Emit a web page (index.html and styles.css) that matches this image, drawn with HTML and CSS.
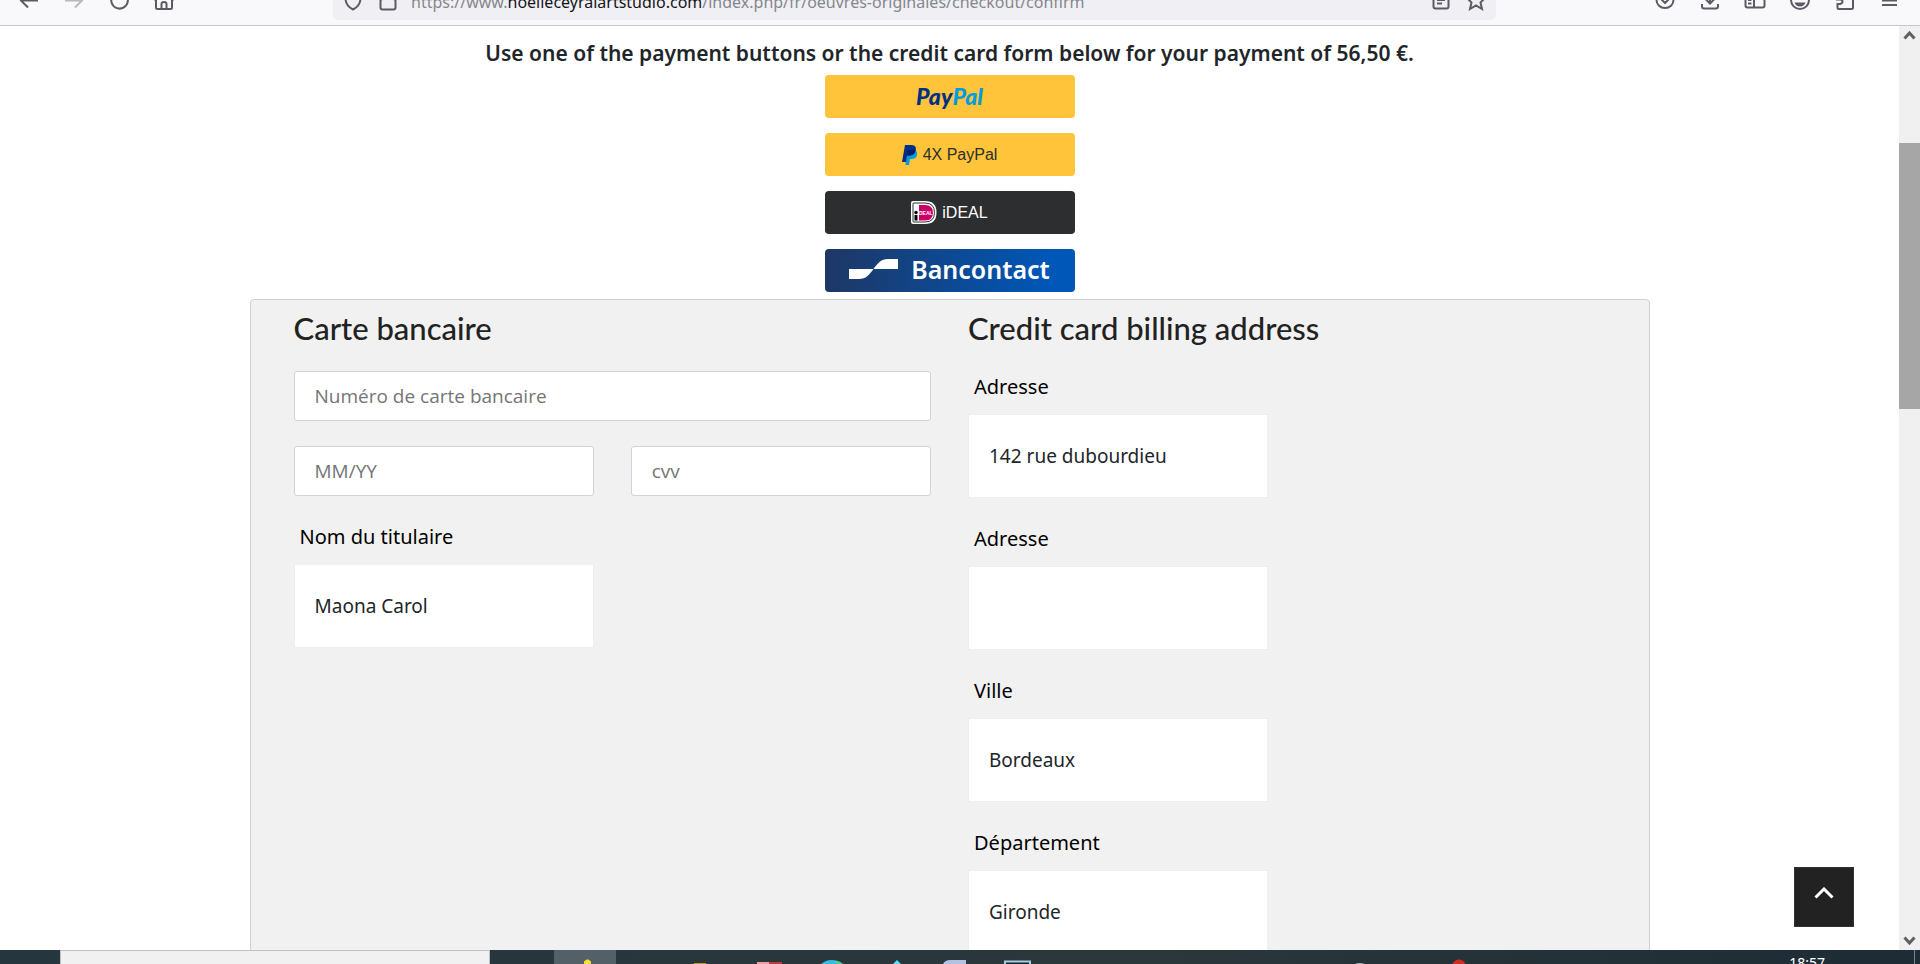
FILE: index.html
```html
<!DOCTYPE html>
<html lang="fr">
<head>
    <meta charset="UTF-8">
    <meta name="viewport" content="width=device-width, initial-scale=1.0">
    <title>Confirmation de commande</title>
    <link rel="stylesheet" href="styles.css">
</head>
<body>
    <header class="toolbar">
        <div class="nav-buttons">
            <button type="button" class="icon-btn" aria-label="Précédent">
                <svg viewBox="0 0 24 24"><path d="M21 12.500H4M11 5.500L4 12.500L11 19.500"/></svg>
            </button>
            <button type="button" class="icon-btn disabled" aria-label="Suivant">
                <svg viewBox="0 0 24 24"><path d="M3 12.500H20M13 5.500L20 12.500L13 19.500"/></svg>
            </button>
            <button type="button" class="icon-btn" aria-label="Actualiser">
                <svg viewBox="0 0 24 24"><path d="M18 6A8.300 8.300 0 1 1 12 4"/></svg>
            </button>
            <button type="button" class="icon-btn" aria-label="Accueil">
                <svg viewBox="0 0 24 24"><path d="M2 12L12 3L22 12M4 11V19.500Q4 21 5.500 21H18.500Q20 21 20 19.500V11M9.500 21V16Q9.500 14 12 14Q14.500 14 14.500 16V21"/></svg>
            </button>
        </div>
        <div class="url-bar">
            <svg class="icon" viewBox="0 0 24 24"><path d="M12 3L19.500 6V11Q19 18 12 21.500Q5 18 4.500 11V6Z"/></svg>
            <svg class="icon" viewBox="0 0 24 24"><rect x="4.500" y="11" width="15" height="10.500" rx="2"/><path d="M8 11V7A4 4 0 0 1 16 7V11"/></svg>
            <span class="url">https://www.<b>noelleceyralartstudio.com</b>/index.php/fr/oeuvres-originales/checkout/confirm</span>
            <svg class="icon" viewBox="0 0 24 24"><rect x="4.500" y="4" width="15" height="16.500" rx="2"/><path d="M8 12H16M8 15.500H13"/></svg>
            <svg class="icon" viewBox="0 0 24 24"><path d="M12 3L14.500 9L21 10L16.500 14.500L18 21L12 17.500L6 21L7.500 14.500L3 10L9.500 9Z"/></svg>
        </div>
        <div class="nav-buttons">
            <button type="button" class="icon-btn" aria-label="Protection">
                <svg viewBox="0 0 24 24"><path d="M3.500 5H20.500V12A8.500 8 0 0 1 3.500 12ZM8 11L12 15L16 11"/></svg>
            </button>
            <button type="button" class="icon-btn" aria-label="Téléchargements">
                <svg viewBox="0 0 24 24"><path d="M12 3V15M7 10.500L12 15.500L17 10.500M4 16V18.500Q4 20.500 6 20.500H18Q20 20.500 20 18.500V16"/></svg>
            </button>
            <button type="button" class="icon-btn" aria-label="Panneau latéral">
                <svg viewBox="0 0 24 24"><rect x="2.500" y="4" width="19" height="15.500" rx="2"/><path d="M11 4V19M5 12H8.500M5 15.500H8.500"/></svg>
            </button>
            <button type="button" class="icon-btn" aria-label="Compte">
                <svg viewBox="0 0 24 24"><circle cx="12" cy="12" r="9"/><path class="solid" d="M6.500 14.500H17.500Q16 18.500 12 18.500Q8 18.500 6.500 14.500Z"/><circle class="solid" cx="12" cy="9" r="3"/></svg>
            </button>
            <button type="button" class="icon-btn" aria-label="Extensions">
                <svg viewBox="0 0 24 24"><path d="M4 9V6H10Q10 2 12.500 2Q15 2 15 6H20V19.500Q20 21 18.500 21H6Q4.500 21 4.500 19.500V16H7Q9.500 15.500 9.500 13.500Q9.500 11.500 7 11.500H4Z"/></svg>
            </button>
            <button type="button" class="icon-btn" aria-label="Menu">
                <svg viewBox="0 0 24 24"><path d="M4 8.500H19M4 12.500H19M4 17H19"/></svg>
            </button>
        </div>
    </header>

    <div class="viewport">
        <main class="page">
            <h1 class="title">Use one of the payment buttons or the credit card form below for your payment of 56,50 €.</h1>

            <div class="pay-buttons">
                <button type="button" class="pay-btn yellow paypal"><span class="pay">Pay</span><span class="pal">Pal</span></button>
                <button type="button" class="pay-btn yellow">
                    <svg width="16" height="20" viewBox="0 0 16 20">
                        <path fill="#009cde" d="M5 5H12Q16 6 15 10Q14 14 10 14H8L7 20H3.500Z"/>
                        <path fill="#002f86" d="M3 0H9Q14 0 14 4Q13.500 10 8 10.500H5L4 17H0Z"/>
                        <path fill="#001f6b" d="M6 5H13.500Q12.500 10 8 10.500H5Z"/>
                    </svg>
                    <span>4X PayPal</span>
                </button>
                <button type="button" class="pay-btn dark">
                    <svg width="26" height="23" viewBox="0 0 26 23">
                        <path fill="#fff" d="M2 0H14Q25.500 0 25.500 11.500Q25.500 23 14 23H2Q0 23 0 21V2Q0 0 2 0Z"/>
                        <path fill="none" stroke="#2c2e2f" d="M2.500 2H14Q23.500 2 23.500 11.500Q23.500 21 14 21H2.500Q2 21 2 20.500V2.500Q2 2 2.500 2Z"/>
                        <path fill="#cc0066" d="M8 4H14Q22 4 22 11.500Q22 19.500 14 19.500H8Z"/>
                        <circle cx="5" cy="11.500" r="1.700"/>
                        <path d="M3.500 14H6.500V19.500H3.500Z"/>
                        <text x="8" y="13.500" class="ideal-mark">DEAL</text>
                    </svg>
                    <span>iDEAL</span>
                </button>
                <button type="button" class="pay-btn bancontact">
                    <svg width="49" height="20" viewBox="0 0 49 20">
                        <path fill="#fff" d="M0 10H24.500C20 16 17 20 10 20H0ZM24.500 10C29 4 32 0 39 0H49V10Z"/>
                    </svg>
                    <span>Bancontact</span>
                </button>
            </div>

            <form class="panel">
                <section>
                    <h2>Carte bancaire</h2>
                    <div class="card-fields">
                        <input type="text" class="card-input wide" aria-label="Numéro de carte bancaire" placeholder="Numéro de carte bancaire">
                        <input type="text" class="card-input" aria-label="Date d'expiration" placeholder="MM/YY">
                        <input type="text" class="card-input" aria-label="cvv" placeholder="cvv">
                    </div>
                    <div class="field">
                        <label for="titulaire">Nom du titulaire</label>
                        <input type="text" id="titulaire" name="titulaire" value="Maona Carol">
                    </div>
                </section>
                <section>
                    <h2>Credit card billing address</h2>
                    <div class="field">
                        <label for="adresse1">Adresse</label>
                        <input type="text" id="adresse1" name="adresse1" value="142 rue dubourdieu">
                    </div>
                    <div class="field">
                        <label for="adresse2">Adresse</label>
                        <input type="text" id="adresse2" name="adresse2">
                    </div>
                    <div class="field">
                        <label for="ville">Ville</label>
                        <input type="text" id="ville" name="ville" value="Bordeaux">
                    </div>
                    <div class="field">
                        <label for="departement">Département</label>
                        <input type="text" id="departement" name="departement" value="Gironde">
                    </div>
                </section>
            </form>
        </main>

        <div class="scrollbar">
            <svg width="13" height="9" viewBox="0 0 13 9"><path d="M1.500 7.500L6.500 2L11.500 7.500"/></svg>
            <div class="track"><div class="thumb"></div></div>
            <svg width="13" height="9" viewBox="0 0 13 9"><path d="M1.500 1.500L6.500 7L11.500 1.500"/></svg>
        </div>

        <button type="button" class="to-top" aria-label="Haut de page">
            <svg width="20" height="12" viewBox="0 0 20 12"><path d="M1.500 10.500L10 2L18.500 10.500"/></svg>
        </button>
    </div>

    <footer class="taskbar">
        <div class="search"></div>
        <div class="apps">
            <svg class="active" viewBox="0 0 62 14"><path fill="#f4e23a" d="M30 14V11.500L32.500 9.500H34.500L37 11.500V14Z"/></svg>
            <svg viewBox="0 0 62 14"></svg>
            <svg viewBox="0 0 62 14"><path fill="#c9971c" d="M16 13H28V14H16Z"/></svg>
            <svg viewBox="0 0 62 14"><path fill="#e8a59d" d="M17 12H30V14H17Z"/><path fill="#b8403c" d="M29 12H42V14H29Z"/></svg>
            <svg viewBox="0 0 62 14"><path fill="#36bfdc" d="M19 14Q24 10 29 10Q36 10 41 14Z"/><path fill="#48cf9c" d="M34 10.500Q38 11 41 14H34Z"/></svg>
            <svg viewBox="0 0 62 14"><path fill="#5fdcec" d="M33 10L37 14H29Z"/></svg>
            <svg viewBox="0 0 62 14"><path fill="#b4c2e2" d="M17 14Q19 10 24 10H40V14Z"/></svg>
            <svg viewBox="0 0 62 14"><path fill="#16252e" stroke="#a4cde0" stroke-width="2" d="M17 16V11.500H42V16Z"/></svg>
        </div>
        <svg class="tray" viewBox="0 0 120 14"><path fill="#b5b8ba" d="M5 14Q9 12 15 14Z"/><circle fill="#cf2c20" cx="109" cy="16.500" r="7"/></svg>
        <time class="clock">18:57</time>
    </footer>
</body>
</html>
```

FILE: styles.css
```css
* {
    box-sizing: border-box;
}

body {
    display: flex;
    flex-direction: column;
    height: 100vh;
    margin: 0;
    overflow: hidden;
    background-color: #fff;
    font-family: "Noto Sans", sans-serif;
    color: #212529;
}

button {
    border: none;
    padding: 0;
    cursor: pointer;
}

/* Browser toolbar */
.toolbar {
    display: flex;
    align-items: flex-end;
    flex: none;
    height: 26px;
    padding: 0 18px 5px 17px;
    overflow: hidden;
    background-color: #f9f9fb;
    border-bottom: 1px solid #c5c6cc;
}

.nav-buttons {
    display: flex;
    align-items: center;
    gap: 21px;
    height: 40px;
}

.icon-btn {
    width: 24px;
    height: 24px;
    background: none;
}

.icon-btn svg, .icon {
    display: block;
    flex: none;
    width: 24px;
    height: 24px;
    fill: none;
    stroke: #5b5b66;
    stroke-width: 2;
}

.icon-btn .solid {
    fill: #5b5b66;
    stroke: none;
}

.disabled {
    opacity: 0.4;
}

.url-bar {
    display: flex;
    align-items: center;
    gap: 11px;
    flex: 1;
    height: 40px;
    margin: 0 157px;
    padding: 0 8px;
    border-radius: 5px;
    background-color: #f0f0f4;
}

.url {
    flex: 1;
    padding-top: 4px;
    font-size: 16px;
    line-height: 24px;
    white-space: nowrap;
    color: #86868d;
}

.url b {
    font-weight: normal;
    color: #15141a;
}

/* Page */
.viewport {
    display: flex;
    flex: 1;
    min-height: 0;
    position: relative;
}

.page {
    flex: 1;
    overflow: hidden;
    padding-top: 15px;
}

.title {
    margin: 0 0 10px;
    font-size: 21px;
    font-weight: 600;
    line-height: 24px;
    text-align: center;
}

.pay-buttons {
    display: flex;
    flex-direction: column;
    gap: 15px;
    width: 250px;
    margin: 0 auto 7px;
}

.pay-btn {
    display: flex;
    align-items: center;
    justify-content: center;
    gap: 5px;
    height: 43px;
    border-radius: 4px;
    font-family: "Liberation Sans", Arial, sans-serif;
    font-size: 16px;
}

.yellow {
    background-color: #ffc439;
    color: #2c2e2f;
}

.paypal {
    gap: 0;
    padding-bottom: 2px;
    font-family: Lato, sans-serif;
    font-size: 23px;
    font-weight: 900;
    font-style: italic;
}

.pay {
    color: #002f86;
}

.pal {
    color: #009cde;
}

.dark {
    background-color: #2c2e2f;
    color: #fff;
}

.ideal-mark {
    fill: #fff;
    font-size: 5px;
    font-weight: bold;
}

.bancontact {
    gap: 13px;
    padding-bottom: 4px;
    background: linear-gradient(to right, #1e3764, #0057b8 90%);
    color: #fff;
    font-family: "Noto Sans", sans-serif;
    font-size: 25px;
    font-weight: 600;
}

.panel {
    display: grid;
    grid-template-columns: 1fr 1fr;
    gap: 37px;
    max-width: 1400px;
    margin: 0 auto;
    padding: 8px 43px;
    border: 1px solid #ced0d2;
    border-radius: 4px;
    background-color: #f1f1f1;
}

h2 {
    margin: 0 0 23px;
    font-family: Lato, sans-serif;
    font-size: 31px;
    font-weight: 500;
    line-height: 40px;
    color: #222;
}

.card-fields {
    display: grid;
    grid-template-columns: 1fr 1fr;
    gap: 25px 37px;
    margin-bottom: 25px;
}

.card-input {
    width: 100%;
    height: 50px;
    padding: 0 20px;
    border: 1px solid #ced4da;
    border-radius: 3px;
    background-color: #fff;
    font-family: "Open Sans", sans-serif;
    font-size: 19px;
}

.card-input::placeholder {
    color: #757575;
    opacity: 1;
}

.wide {
    grid-column: 1 / 3;
}

.field {
    margin-bottom: 25px;
}

.field label {
    display: block;
    margin-bottom: 11px;
    padding-left: 6px;
    font-size: 20px;
    line-height: 32px;
    color: #000;
}

.field input {
    display: block;
    width: 300px;
    height: 84px;
    padding: 0 20px;
    border: 1px solid #eee;
    background-color: #fff;
    font-family: "Noto Sans", sans-serif;
    font-size: 19px;
    color: #212529;
}

.scrollbar {
    display: flex;
    flex-direction: column;
    align-items: center;
    width: 21px;
    padding: 5px 0;
    background-color: #f0f0f0;
}

.scrollbar svg {
    fill: none;
    stroke: #606060;
    stroke-width: 3;
}

.track {
    flex: 1;
    width: 100%;
    padding-top: 103px;
}

.thumb {
    height: 266px;
    background-color: #a6a6a6;
}

.to-top {
    position: absolute;
    right: 66px;
    bottom: 23px;
    width: 60px;
    height: 60px;
    padding-bottom: 6px;
    border: 1px solid #333;
    background-color: #222;
}

.to-top svg {
    fill: none;
    stroke: #fff;
    stroke-width: 3;
}

/* Taskbar */
.taskbar {
    display: flex;
    flex: none;
    height: 14px;
    padding-left: 60px;
    overflow: hidden;
    background: linear-gradient(to right, #25363e, #2a373b 60%, #1d2c35);
}

.search {
    width: 430px;
    border: 1px solid #bfc1c1;
    border-bottom: none;
    background-color: #f1f1f1;
}

.apps {
    display: flex;
    margin-left: 64px;
}

.apps svg {
    width: 62px;
    height: 14px;
}

.apps .active {
    background-color: #536067;
}

.tray {
    width: 120px;
    height: 14px;
    margin-left: 300px;
}

.clock {
    margin-left: auto;
    margin-right: 5px;
    padding-right: 89px;
    border-right: 1px solid #7b868b;
    padding-top: 4px;
    font-size: 14px;
    line-height: 18px;
    color: #fff;
}
```
